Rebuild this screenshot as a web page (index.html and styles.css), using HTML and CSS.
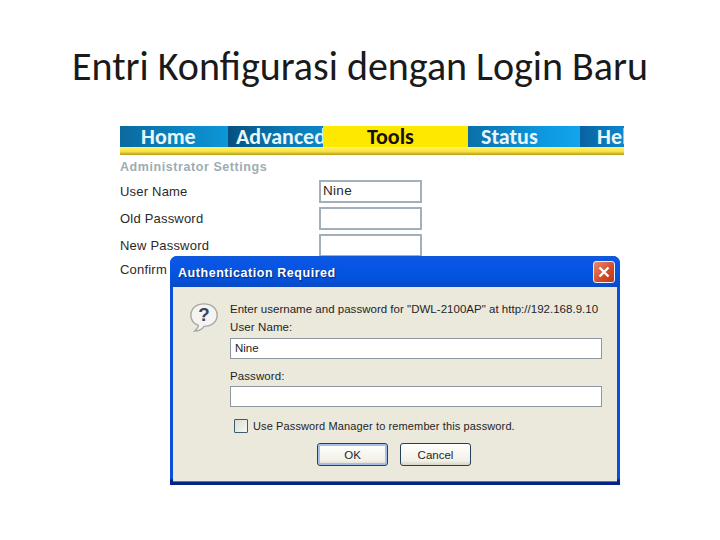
FILE: index.html
```html
<!DOCTYPE html>
<html lang="id">
<head>
<meta charset="utf-8">
<title>Entri Konfigurasi dengan Login Baru</title>
<link rel="stylesheet" href="styles.css">
</head>
<body>
<main class="slide">
  <h1 class="title">Entri Konfigurasi dengan Login Baru</h1>
  <figure class="shot">
    <nav class="nav">
      <div class="tabs">
        <span class="tab tab-home">Home</span>
        <span class="tab tab-adv">Advanced</span>
        <span class="tab tab-tools">Tools</span>
        <span class="tab tab-status">Status</span>
        <span class="tab tab-help">Help</span>
      </div>
      <div class="strip"></div>
    </nav>
    <h2 class="section">Administrator Settings</h2>
    <div class="form">
      <label class="lbl">User Name</label><div class="box">Nine</div>
      <label class="lbl">Old Password</label><div class="box"></div>
      <label class="lbl">New Password</label><div class="box"></div>
      <label class="lbl lbl-last">Confirm</label>
    </div>
    <section class="dialog">
      <header class="titlebar">
        <span class="dtitle">Authentication Required</span>
        <span class="close">
          <svg width="14" height="14" viewBox="0 0 14 14"><path d="M2.5 2.5 11.500 11.500M11.500 2.500 2.500 11.500" stroke="#fff" stroke-width="2.400" fill="none"/></svg>
        </span>
      </header>
      <div class="dbody">
        <svg class="qicon" width="30" height="32" viewBox="0 0 32 32">
          <path d="M16 2C8 2 2 7 2 14c0 5 3 9 8 11 0 2-2 4-4 6 4 0 8-2 10-5 8 0 14-5 14-12S24 2 16 2z" fill="#f4f4f2" stroke="#a8a8a4" stroke-width="1.500"/>
          <text x="16" y="20" text-anchor="middle" class="qmark">?</text>
        </svg>
        <div class="dcontent">
          <p class="prompt">Enter username and password for "DWL-2100AP" at http://192.168.9.10</p>
          <p class="field-label">User Name:</p>
          <div class="input">Nine</div>
          <p class="field-label field-gap">Password:</p>
          <div class="input"></div>
          <div class="remember"><span class="check"></span><span>Use Password Manager to remember this password.</span></div>
          <div class="buttons">
            <span class="btn btn-default">OK</span>
            <span class="btn">Cancel</span>
          </div>
        </div>
      </div>
    </section>
  </figure>
</main>
</body>
</html>
```

FILE: styles.css
```css
* { box-sizing: border-box; }
html, body { margin: 0; padding: 0; background: #fff; }
.slide { width: 720px; height: 540px; display: flex; flex-direction: column; align-items: center; overflow: hidden; }
.title { margin: 0; padding-top: 44px; height: 125px; font: 400 40px/46px Carlito, Lato, sans-serif; color: #1a1a1a; white-space: nowrap; }
.shot { position: relative; margin: 0 0 0 120px; width: 504px; height: 360px; background: #fff; font-family: "Liberation Sans", sans-serif; align-self: flex-start; }
.nav { height: 30px; display: flex; flex-direction: column; }
.tabs { display: flex; height: 21px; margin-top: 1px; }
.tab { display: block; white-space: nowrap; font: 700 22px/21px Carlito, Lato, sans-serif; color: #e6f6fb; }
.tab-home { width: 108px; padding-left: 21px; background: linear-gradient(90deg, #0b6a9e 0, #0a78b0 30%, #0d96d8 100%); }
.tab-adv { width: 95px; padding-left: 8px; overflow: hidden; background: linear-gradient(90deg, #07507f, #0a78b4 60%, #0a86c6); }
.tab-tools { width: 145px; padding-left: 44px; color: #151205; background: #ffe800; }
.tab-status { width: 112px; padding-left: 13px; background: linear-gradient(90deg, #0a6fa8, #0d9ae2 70%, #12a4ec); }
.tab-help { width: 44px; padding-left: 17px; overflow: hidden; background: linear-gradient(90deg, #0a62a0, #0d86cc); }
.strip { height: 8px; background: linear-gradient(180deg, #fff276 0, #fbe23a 55%, #b49b20 100%); }
.section { margin: 5px 0 0; font: 700 12.500px/15px "Liberation Sans", sans-serif; color: #9eacb4; letter-spacing: .57px; }
.form { display: grid; grid-template-columns: 199px 103px; grid-auto-rows: 27px; margin-top: 3px; color: #2a2a2a; font-size: 13px; align-items: center; }
.lbl { line-height: 16px; letter-spacing: .2px; }
.box { height: 23px; border: 2px solid #a3b0b8; padding-left: 2px; line-height: 17px; font-size: 13.500px; letter-spacing: .3px; }
.lbl-last { margin-top: -6px; }
.dialog { position: absolute; left: 50px; top: 131px; width: 450px; height: 229px; display: flex; flex-direction: column; border-radius: 7px 7px 0 0; background: linear-gradient(180deg, #0a50d8 97%, #06238a 98%); }
.titlebar { height: 31px; display: flex; align-items: center; justify-content: space-between; padding: 2px 5px 0 8px; border-radius: 7px 7px 0 0; background: linear-gradient(180deg, #0f5ad8 0, #0a56e6 15%, #0353de 70%, #0a49c4 100%); }
.dtitle { font: 700 12.500px/16px "Liberation Sans", sans-serif; color: #fff; letter-spacing: .55px; text-shadow: 1px 1px 1px #0a2a80; }
.close { width: 22px; height: 22px; margin-top: -2px; display: flex; align-items: center; justify-content: center; border: 1px solid #e8eef8; border-radius: 3px; background: linear-gradient(135deg, #e88a70, #d24a28 60%, #b8381c); }
.dbody { flex: 1; margin: 0 3px 3px; padding: 14px 0 0 16px; display: flex; background: #ebe8dc; border-bottom: 1px solid #3a78e0; font: 11.500px/14px "Liberation Sans", sans-serif; color: #1f1f1f; }
.qicon { flex: none; margin-right: 11px; }
.qmark { font: 700 20px "Liberation Sans", sans-serif; fill: #3a4658; }
.dcontent { width: 372px; }
.prompt { margin: 0; height: 19px; line-height: 16px; white-space: nowrap; letter-spacing: .02px; }
.field-label { margin: 0; height: 18px; line-height: 14px; letter-spacing: .1px; }
.field-gap { margin-top: 9px; height: 18px; line-height: 16px; }
.input { height: 21px; background: #fff; border: 1px solid #8f9aa0; padding-left: 4px; line-height: 19px; }
.remember { display: flex; align-items: center; gap: 5px; margin: 11px 0 0 4px; height: 16px; font-size: 11px; letter-spacing: .12px; white-space: nowrap; }
.check { width: 14px; height: 14px; border: 1px solid #3c5a70; border-radius: 1px; background: linear-gradient(135deg, #dcdcd4, #f8f8f4); }
.buttons { display: flex; gap: 12px; margin: 9px 0 0 87px; }
.btn { width: 71px; height: 23px; display: flex; align-items: center; justify-content: center; border: 1px solid #24405c; border-radius: 3px; background: linear-gradient(180deg, #fff, #f2f0e6 80%, #d8d4c6); }
.btn-default { box-shadow: inset 0 0 0 2px #a4c0e8; }
```
